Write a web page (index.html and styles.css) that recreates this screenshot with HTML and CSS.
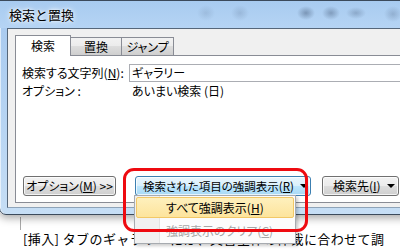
FILE: index.html
```html
<!DOCTYPE html>
<html lang="ja">
<head>
    <meta charset="UTF-8">
    <meta name="viewport" content="width=device-width, initial-scale=1.0">
    <title>検索と置換</title>
    <link rel="stylesheet" href="styles.css">
</head>
<body>
    <div class="doc">
        <p class="doc-text">[挿入] タブのギャラリーには、文書全体の体裁に合わせて調</p>
    </div>
    <div class="crop-mark"></div>

    <div class="dialog">
        <div class="title-bar">
            <span class="title">検索と置換</span>
        </div>
        <div class="client">
            <div class="tabs">
                <div class="tab active">検索</div>
                <div class="tab">置換</div>
                <div class="tab">ジャンプ</div>
            </div>
            <div class="tab-page">
                <div class="field-row">
                    <label class="field-label" for="findText">検索する文字列(<u>N</u>):</label>
                    <div class="field-input" id="findText">ギャラリー</div>
                </div>
                <div class="field-row">
                    <span class="field-label">オプション :</span>
                    <span class="field-value">あいまい検索 (日)</span>
                </div>
                <div class="button-row">
                    <button class="btn btn-options">オプション(<u>M</u>) &gt;&gt;</button>
                    <button class="btn btn-highlight pressed">検索された項目の強調表示(<u>R</u>)<span class="arrow"></span></button>
                    <button class="btn btn-findin">検索先(<u>I</u>)<span class="arrow"></span></button>
                </div>
            </div>
        </div>
    </div>

    <!-- dropdown of the highlight button -->
    <ul class="menu">
        <li class="menu-item hot">すべて強調表示(<u>H</u>)</li>
        <li class="menu-item disabled">強調表示のクリア(<u>C</u>)</li>
    </ul>

    <div class="callout"></div>
</body>
</html>
```

FILE: styles.css
```css
body {
    margin: 0;
    width: 400px;
    height: 250px;
    overflow: hidden;
    position: relative;
    background: #fff;
    font-family: "Noto Sans CJK JP", sans-serif;
    font-feature-settings: "palt";
    color: #000;
}

/* word document behind the dialog */
.doc {
    padding: 230px 0 0 23px;
}

.doc-text {
    margin: 0;
    font-size: 13px;
    line-height: 18px;
    white-space: nowrap;
    letter-spacing: 0.4px;
    font-feature-settings: normal;
}

.crop-mark {
    position: absolute;
    left: 20px;
    top: 217px;
    width: 1px;
    height: 13px;
    background: #a9a9a9;
}

/* dialog window */
.dialog {
    position: absolute;
    left: -1px;
    top: 0;
    width: 450px;
    height: 215px;
    box-sizing: border-box;
    border: 1px solid #3b4a5b;
    border-radius: 0 0 7px 7px;
    background: linear-gradient(to bottom, #a6c8ee, #b8d5f3 60%, #c6def5);
    box-shadow: 0 3px 8px rgba(0, 0, 0, 0.35), inset 1px 0 0 rgba(255, 255, 255, 0.6);
    display: flex;
    flex-direction: column;
}

.title-bar {
    height: 27px;
    display: flex;
    align-items: center;
    padding-left: 9px;
    background:
        radial-gradient(ellipse 9px 7px at 306px 12px, rgba(60, 80, 110, 0.45), transparent),
        radial-gradient(ellipse 9px 7px at 331px 12px, rgba(60, 80, 110, 0.4), transparent),
        radial-gradient(ellipse 10px 6px at 356px 12px, rgba(60, 80, 110, 0.3), transparent),
        radial-gradient(ellipse 9px 8px at 393px 13px, rgba(60, 80, 110, 0.25), transparent),
        radial-gradient(ellipse 9px 8px at 206px 12px, rgba(60, 80, 110, 0.15), transparent),
        radial-gradient(ellipse 9px 8px at 240px 12px, rgba(60, 80, 110, 0.18), transparent),
        linear-gradient(to bottom, #a8cbf0, #b5d4f4);
}

.title {
    font-size: 13px;
    line-height: 16px;
    text-shadow: 0 0 6px #fff, 0 0 3px #fff;
    font-feature-settings: normal;
}

.client {
    height: 180px;
    box-sizing: border-box;
    margin-left: 7px;
    border-top: 1px solid #56677a;
    border-left: 1px solid #56677a;
    border-bottom: 1px solid #8ea3b8;
    background: #f0f0f0;
    padding: 6px 0 4px 7px;
    display: flex;
    flex-direction: column;
}

/* tabs */
.tabs {
    display: flex;
    align-items: flex-end;
    height: 21px;
    margin-bottom: -1px;
    position: relative;
    z-index: 1;
}

.tab {
    box-sizing: border-box;
    height: 19px;
    width: 52px;
    margin-left: -1px;
    border: 1px solid #898c95;
    background: linear-gradient(to bottom, #f2f2f2, #ebebeb 50%, #dddddd 50%, #cfcfcf);
    font-size: 12px;
    line-height: 17px;
    text-align: center;
}

.tab:last-child {
    width: 53px;
}

.tab.active {
    height: 21px;
    width: 56px;
    margin-left: 0;
    border-bottom: none;
    background: #fff;
    line-height: 19px;
    position: relative;
    z-index: 2;
}

.tab-page {
    flex: 1;
    background: #fff;
    border: 1px solid #898c95;
    border-right: none;
    padding: 8px 0 6px 6px;
    display: flex;
    flex-direction: column;
}

.field-row {
    display: flex;
    align-items: center;
    height: 18px;
    font-size: 12px;
}

.field-label {
    width: 107px;
    line-height: 16px;
}

.field-input {
    flex: 1;
    height: 18px;
    box-sizing: border-box;
    border: 1px solid #abadb3;
    border-right: none;
    padding-left: 2px;
    line-height: 16px;
}

.field-value {
    padding-left: 3px;
    line-height: 16px;
}

/* buttons */
.button-row {
    margin-top: auto;
    display: flex;
    padding-left: 1px;
}

.btn {
    height: 20px;
    box-sizing: border-box;
    border: 1px solid #707070;
    border-radius: 3px;
    background: linear-gradient(to bottom, #f2f2f2, #ebebeb 50%, #dddddd 50%, #cfcfcf);
    box-shadow: inset 0 0 0 1px rgba(255, 255, 255, 0.75);
    font-family: inherit;
    font-feature-settings: "palt";
    font-size: 12px;
    line-height: 16px;
    white-space: nowrap;
    color: #000;
    padding: 0;
    display: flex;
    align-items: center;
    justify-content: center;
}

.btn-options {
    width: 93px;
}

.btn-highlight {
    width: 176px;
    margin-left: 19px;
    justify-content: flex-start;
    padding-left: 7px;
    font-size: 11.5px;
}

.btn-findin {
    width: 77px;
    margin-left: 11px;
    justify-content: flex-start;
    padding-left: 10px;
}

.btn.pressed {
    border-color: #3c7fb1;
    background: linear-gradient(to bottom, #eaf6fd, #d9f0fc 50%, #bee6fd 50%, #a7d9f5);
}

.arrow {
    width: 0;
    height: 0;
    margin-left: 6px;
    border-left: 4px solid transparent;
    border-right: 4px solid transparent;
    border-top: 4px solid #000;
}

/* dropdown menu */
.menu {
    position: absolute;
    left: 134px;
    top: 195px;
    width: 162px;
    height: 49px;
    box-sizing: border-box;
    margin: 0;
    padding: 1px;
    list-style: none;
    background: linear-gradient(to right, #f1f1f1 24px, #e2e3e3 24px, #e2e3e3 25px, #fcfcfc 25px);
    border: 1px solid #a7abb0;
    box-shadow: 2px 2px 3px rgba(0, 0, 0, 0.2);
    font-size: 12px;
}

.menu-item {
    height: 21px;
    box-sizing: border-box;
    line-height: 19px;
    padding-left: 29px;
    border: 1px solid transparent;
    border-radius: 2px;
}

.menu-item.hot {
    border-color: #f2c867;
    background: linear-gradient(to bottom, #fef0bd, #fde49c);
}

.menu-item.disabled {
    margin-top: 2px;
    color: #a7a7a7;
}

/* red annotation around the button */
.callout {
    position: absolute;
    left: 123px;
    top: 168px;
    width: 185px;
    height: 64px;
    box-sizing: border-box;
    border: 3px solid #ee0a10;
    border-radius: 11px;
}
```
